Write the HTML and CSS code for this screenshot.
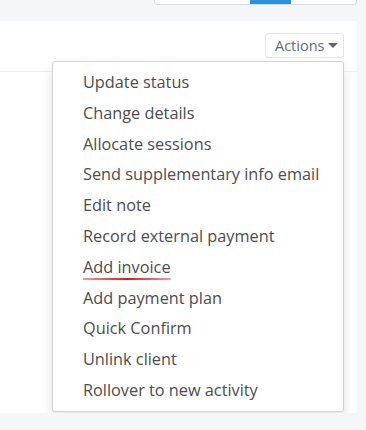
FILE: index.html
```html
<!DOCTYPE html>
<html>
<head>
  <title>Booking actions</title>
  <link rel="stylesheet" href="styles.css">
</head>
<body>
  <div class="top-bar">
    <div class="btn-group">
      <span class="seg"></span>
      <span class="seg active"></span>
      <span class="seg last"></span>
    </div>
  </div>

  <div class="panel">
    <div class="panel-head">
      <div class="actions">
        <button class="actions-btn">Actions <span class="caret"></span></button>
        <ul class="menu">
          <li>Update status</li>
          <li>Change details</li>
          <li>Allocate sessions</li>
          <li>Send supplementary info email</li>
          <li>Edit note</li>
          <li>Record external payment</li>
          <li><span class="marked">Add invoice</span></li>
          <li>Add payment plan</li>
          <li>Quick Confirm</li>
          <li>Unlink client</li>
          <li>Rollover to new activity</li>
        </ul>
      </div>
    </div>
    <div class="panel-body"></div>
  </div>
</body>
</html>
```

FILE: styles.css
```css
body {
  margin: 0;
  background-color: #f5f6f8;
  font-family: 'Open Sans', sans-serif;
}
.top-bar {
  display: flex;
  justify-content: flex-end;
  padding-right: 9px;
}
.btn-group {
  display: flex;
  width: 201px;
  height: 4px;
  border: 1px solid #d9dce0;
  border-top: none;
  border-radius: 0 0 4px 4px;
  background-color: white;
  overflow: hidden;
}
.seg {
  width: 95px;
}
.seg.active {
  width: 41px;
  background-color: #2f8fd8;
}
.seg.last {
  flex: 1;
}
.panel {
  margin-top: 16px;
  width: 357px;
  height: 392px;
  background-color: white;
  border-radius: 0 3px 3px 0;
}
.panel-head {
  height: 50px;
  border-bottom: 1px solid #eef0f2;
  display: flex;
  justify-content: flex-end;
  padding-right: 13px;
}
.actions {
  position: relative;
  margin-top: 12px;
}
.actions-btn {
  height: 25px;
  width: 79px;
  padding: 0 6px 0 9px;
  background-color: white;
  border: 1px solid #e4e6e9;
  border-radius: 3px;
  font-family: 'Open Sans', sans-serif;
  font-size: 14.5px;
  color: #5b6d82;
  display: flex;
  align-items: center;
  gap: 4px;
}
.caret {
  width: 0;
  height: 0;
  border-left: 5px solid transparent;
  border-right: 5px solid transparent;
  border-top: 5px solid #666;
}
.menu {
  position: absolute;
  top: 28px;
  right: 0;
  width: 290px;
  height: 339px;
  margin: 0;
  padding: 5px 0;
  list-style: none;
  background-color: white;
  border: 1px solid #d0d3d6;
  border-radius: 3px;
  box-shadow: 0 6px 12px rgba(0, 0, 0, 0.12);
  z-index: 2;
}
.menu li {
  height: 30.8px;
  line-height: 30.8px;
  padding-left: 30px;
  font-size: 16.3px;
  color: #4d4d4d;
  white-space: nowrap;
}
.marked {
  display: inline-block;
  line-height: 20px;
  padding-bottom: 3px;
  background-image: linear-gradient(to right, #f39aa0, #e8141c 50%, #f39aa0);
  background-size: 100% 2px;
  background-position: bottom;
  background-repeat: no-repeat;
}
```
